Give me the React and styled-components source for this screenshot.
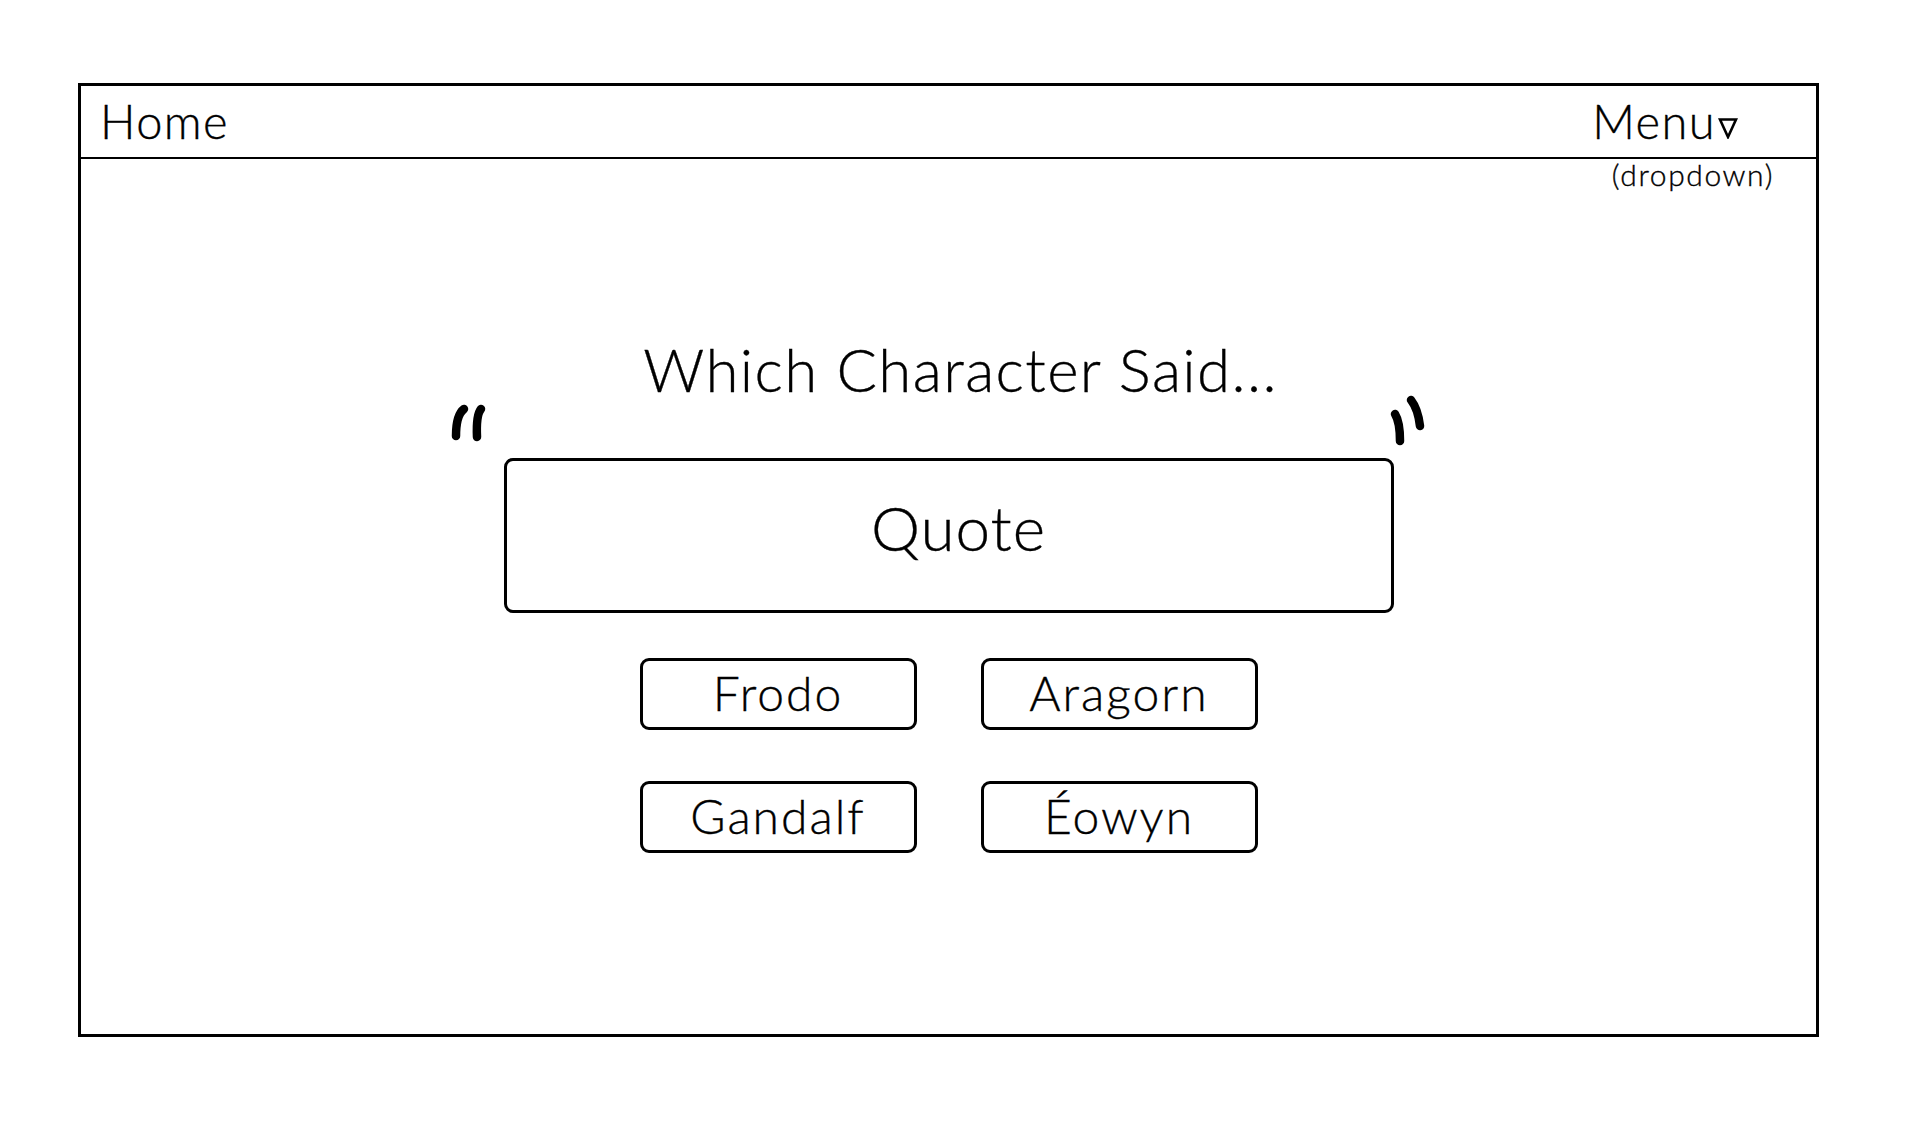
import React from 'react';
import styled, { createGlobalStyle } from 'styled-components';

const GlobalStyle = createGlobalStyle`
  html, body {
    margin: 0;
    padding: 0;
    background: #ffffff;
  }
  body {
    font-family: Lato, "Noto Sans", "Liberation Sans", sans-serif;
    font-weight: 300;
    color: #000000;
    -webkit-text-stroke: 0.35px #000;
  }
`;

const characters = ['Frodo', 'Aragorn', 'Gandalf', 'Éowyn'];

const App = () => {
    return (
        <Page>
            <GlobalStyle />
            <Frame>
                <Header>
                    <NavLink>Home</NavLink>
                    <NavLink>
                        Menu
                        <Caret viewBox="0 0 20 22">
                            <path d="M2 2.5 H18 L10 20 Z" />
                        </Caret>
                    </NavLink>
                </Header>
                <Body>
                    <NoteRow>
                        <Note>(dropdown)</Note>
                    </NoteRow>
                    <Title>Which Character Said...</Title>
                    <QuoteWrap>
                        <QuoteMark side="left" viewBox="0 0 44 48">
                            <path d="M17 9 Q9 15 9 36" />
                            <path d="M34 9 Q29 15 30 37" />
                        </QuoteMark>
                        <QuoteBox>Quote</QuoteBox>
                        <QuoteMark side="right" viewBox="0 0 44 56">
                            <path d="M10 22 Q15 30 15 49" />
                            <path d="M26 8 Q33 17 35 34" />
                        </QuoteMark>
                    </QuoteWrap>
                    <Choices>
                        {characters.map((name) => (
                            <Choice key={name}>{name}</Choice>
                        ))}
                    </Choices>
                </Body>
            </Frame>
        </Page>
    );
};

const Page = styled.div`
    width: 1920px;
    height: 1136px;
    box-sizing: border-box;
    padding: 83px 0 0 78px;
`;

const Frame = styled.div`
    width: 1741px;
    height: 954px;
    box-sizing: border-box;
    border: 3px solid #000;
    display: flex;
    flex-direction: column;
`;

const Header = styled.header`
    height: 73px;
    box-sizing: border-box;
    border-bottom: 2px solid #000;
    display: flex;
    align-items: center;
    justify-content: space-between;
    padding: 0 78px 0 19px;
`;

const NavLink = styled.span`
    display: flex;
    align-items: center;
    font-size: 47px;
    letter-spacing: 1.4px;
    line-height: 1;
`;

const Caret = styled.svg`
    width: 20px;
    height: 22px;
    margin-left: 2px;
    margin-top: 12px;
    fill: none;
    stroke: #000;
    stroke-width: 2.6;
    stroke-linejoin: miter;
`;

const Body = styled.main`
    flex: 1;
    display: flex;
    flex-direction: column;
    align-items: center;
`;

const NoteRow = styled.div`
    align-self: stretch;
    display: flex;
    justify-content: flex-end;
    padding-right: 42px;
`;

const Note = styled.span`
    font-size: 30px;
    letter-spacing: 1.6px;
    line-height: 30px;
`;

const Title = styled.h1`
    margin: 150px 0 0 24px;
    font-size: 60px;
    font-weight: 300;
    letter-spacing: 1.4px;
    line-height: 60px;
`;

const QuoteWrap = styled.div`
    position: relative;
    margin-top: 59px;
`;

const QuoteMark = styled.svg`
    position: absolute;
    fill: none;
    stroke: #000;
    stroke-width: 8.5;
    stroke-linecap: round;
    ${({ side }) =>
        side === 'left'
            ? `left: -57px; top: -58px; width: 44px; height: 48px;`
            : `right: -35px; top: -66px; width: 44px; height: 56px;`}
`;

const QuoteBox = styled.div`
    width: 890px;
    height: 155px;
    box-sizing: border-box;
    border: 3px solid #000;
    border-radius: 9px;
    display: flex;
    align-items: center;
    justify-content: center;
    padding: 0 0 18px 20px;
    font-size: 62px;
    letter-spacing: 1px;
`;

const Choices = styled.div`
    margin-top: 45px;
    display: grid;
    grid-template-columns: repeat(2, 277px);
    column-gap: 64px;
    row-gap: 51px;
`;

const Choice = styled.button`
    height: 72px;
    box-sizing: border-box;
    border: 3px solid #000;
    border-radius: 9px;
    background: #fff;
    color: #000;
    font-family: inherit;
    font-weight: 300;
    font-size: 48px;
    letter-spacing: 2px;
    line-height: 1;
    padding: 0 0 2px;
    display: flex;
    align-items: center;
    justify-content: center;
`;

export default App;
